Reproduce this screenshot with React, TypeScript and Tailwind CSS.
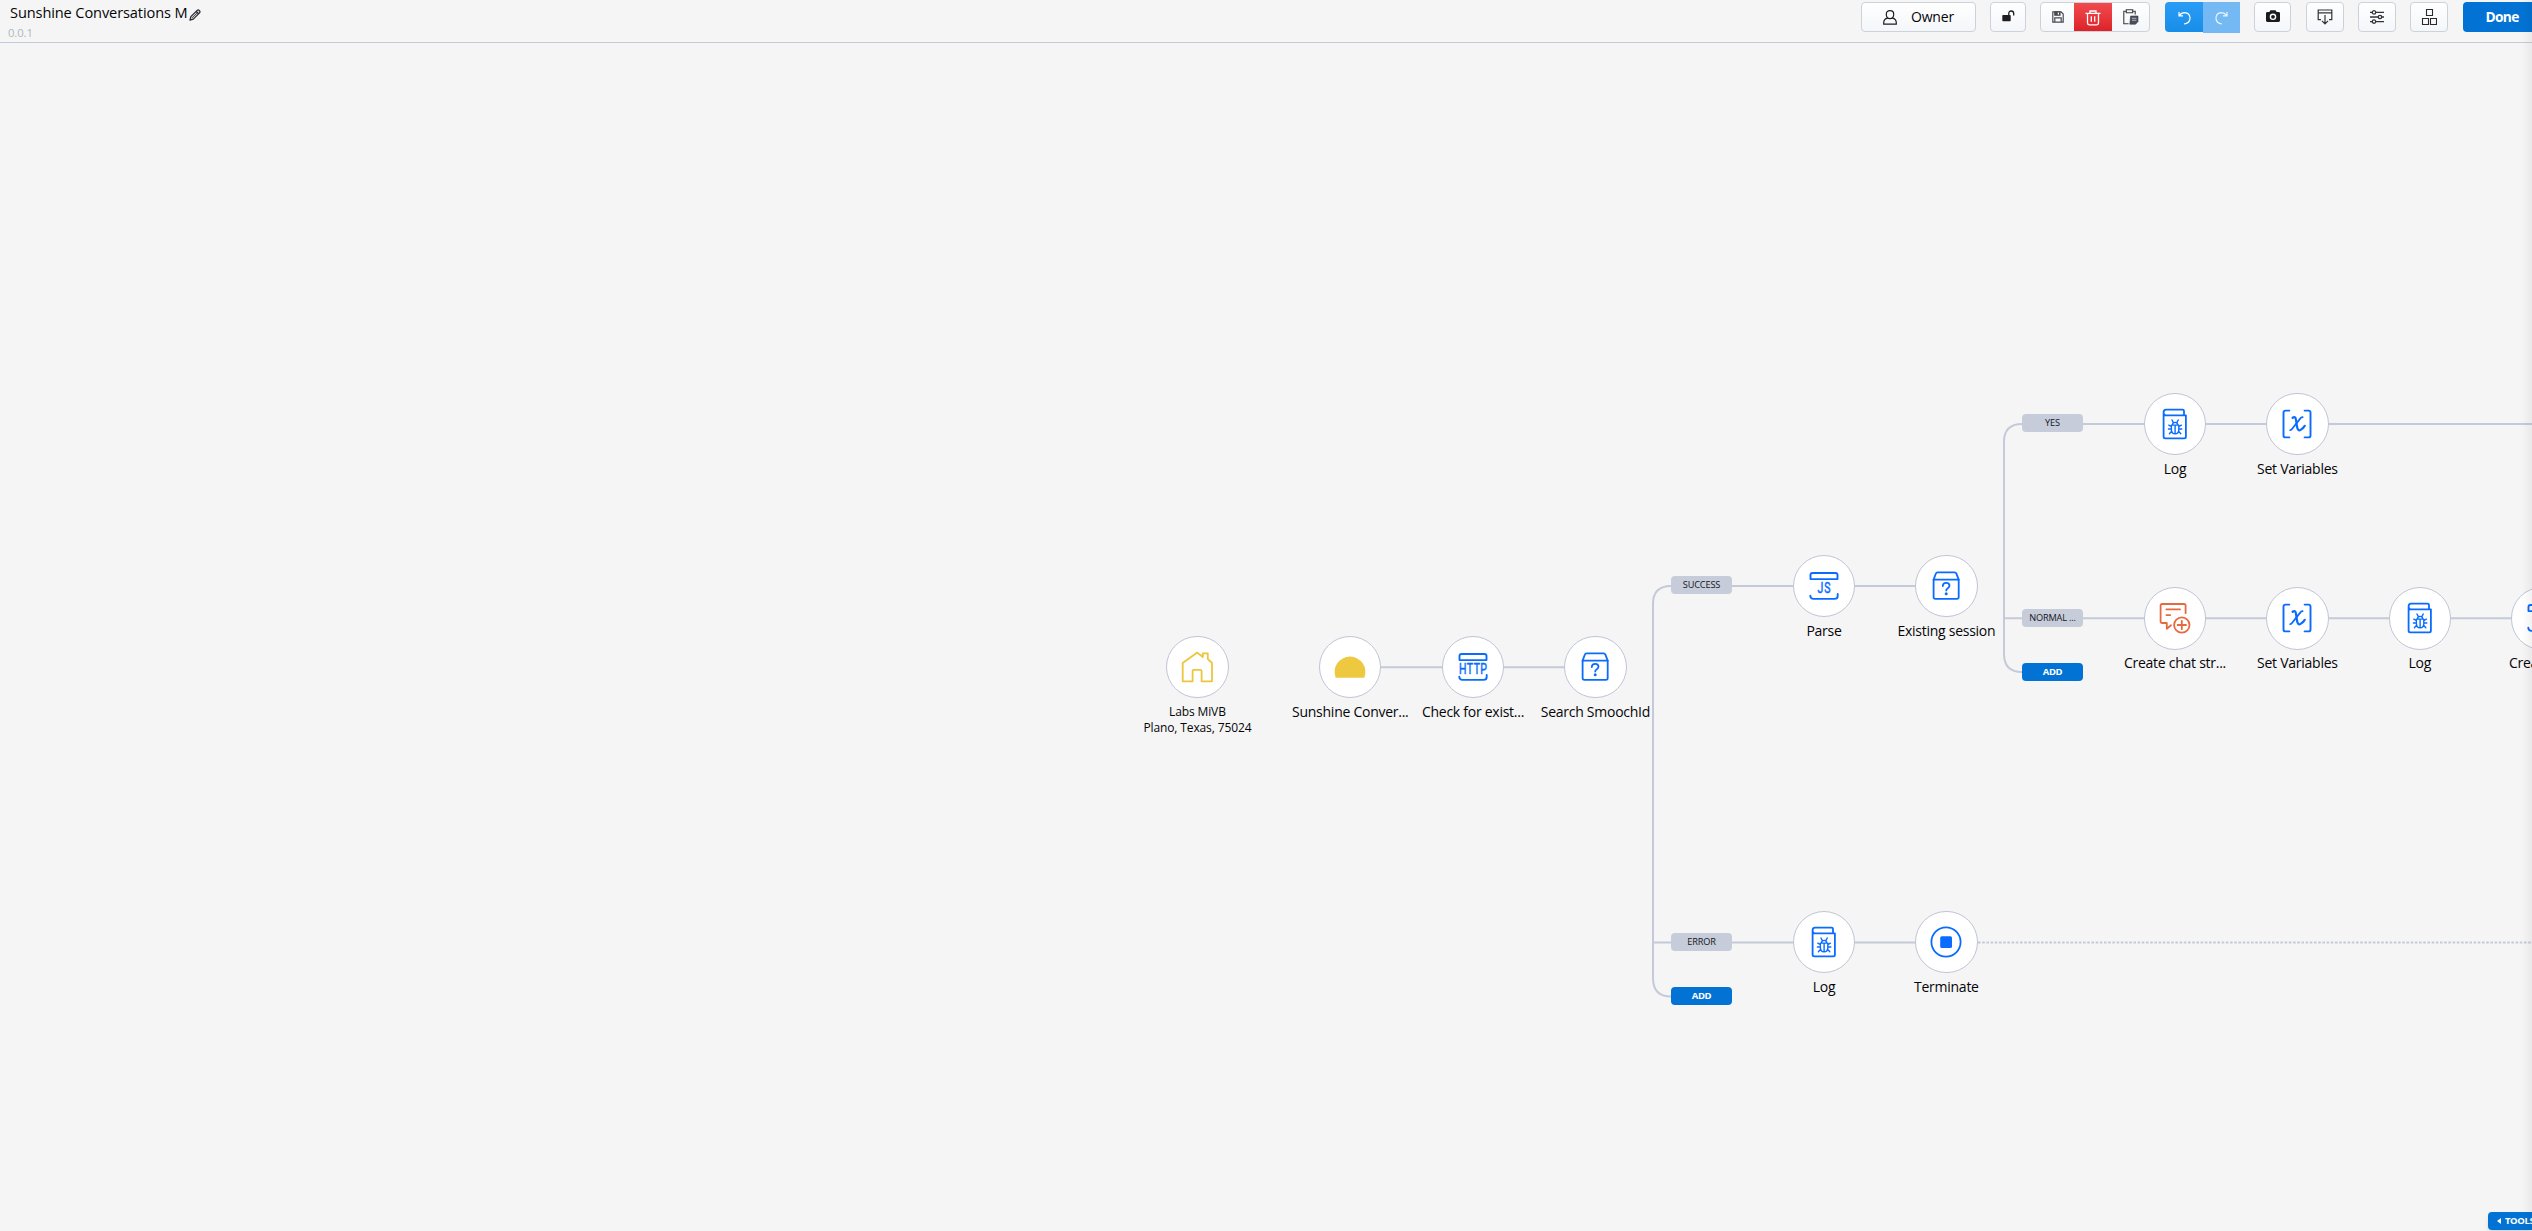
import React from "react";

type IconName = "home" | "sun" | "http" | "js" | "box" | "log" | "stop" | "vars" | "chat";

const BLUE = "#0a6cff";

function Sheet({ label, length }: { label: string; length: number }) {
  return (
    <g fill="none" stroke={BLUE} strokeWidth="1.9" strokeLinecap="round" strokeLinejoin="round">
      <path d="M-13.5 -6.9V-10.9Q-13.5 -13 -11.4 -13H11.4Q13.5 -13 13.5 -10.9V-6.9Z" />
      <path d="M-13.7 9.8Q-13.5 12.9 -10.5 12.9H10.5Q13.7 12.9 13.7 10V8" />
      <text
        transform="scale(0.72 1)"
        x={-length / 2 / 0.72}
        y="7.4"
        textLength={length / 0.72}
        lengthAdjust="spacing"
        fontSize="14.6"
        fill={BLUE}
        stroke={BLUE}
        strokeWidth="0.5"
        className="font-['Roboto',sans-serif]"
      >
        {label}
      </text>
    </g>
  );
}

function NodeIcon({ name }: { name: IconName }) {
  return (
    <svg viewBox="-20 -20 40 40" className="size-10 overflow-visible" fill="none" strokeLinejoin="round" strokeLinecap="round">
      {name === "home" && (
        <path
          d="M-14.3 -4V14.3H-4.4V4Q-4.4 2.8 -3.2 2.8H3.4Q4.6 2.8 4.6 4V14.3H15V-4L10.8 -8V-13.7H5.8V-10L0.3 -14.4Z"
          stroke="#edc53b"
          strokeWidth="1.8"
        />
      )}
      {name === "sun" && <path d="M-14.3 10.7A15.4 15.4 0 1 1 14.3 10.7Z" fill="#eec93f" />}
      {name === "http" && <Sheet label="HTTP" length={28} />}
      {name === "js" && <Sheet label="JS" length={13} />}
      {name === "box" && (
        <g stroke={BLUE} strokeWidth="1.8">
          <path d="M-12.4 -6.4H12.7V11Q12.7 12.8 10.9 12.8H-10.6Q-12.4 12.8 -12.4 11Z" />
          <path d="M-12.4 -6.4L-10.2 -12.3Q-9.8 -13.6 -8.4 -13.6H8.6Q10 -13.6 10.4 -12.3L12.7 -6.4" />
          <path d="M-3.2 0C-3 -4.2 3.5 -3.9 3.5 -0.2C3.5 2.2 0.2 2.1 0.2 4.5" strokeWidth="1.8" />
          <circle cx="0.2" cy="7.7" r="1.5" fill={BLUE} stroke="none" />
        </g>
      )}
      {name === "log" && (
        <g stroke={BLUE} strokeWidth="1.8">
          <path d="M-11.4 -11.3V12.7Q-11.4 14.3 -9.7 14.3H9.2Q10.9 14.3 10.9 12.7V-8.7H-9.1Q-11.4 -8.7 -11.4 -11.6Q-11.4 -14.3 -9 -14.3H7.5Q9 -14.3 9 -13V-8.7" />
          <path
            d="M-3.6 1.1H3.8V5.4Q3.8 9.7 0.1 9.7Q-3.6 9.7 -3.6 5.4ZM-2.6 1Q-2.3 -1.6 0.1 -1.6Q2.5 -1.6 2.8 1M0.1 1.2V9.5M-1.8 -1.6L-3 -4M2 -1.6L3.2 -4M-3.6 2.6L-6.2 1.2M3.8 2.6L6.4 1.2M-3.6 5H-6.6M3.8 5H6.8M-3.4 7.3L-5.6 9.7M3.6 7.3L5.8 9.7"
            strokeWidth="1.4"
          />
        </g>
      )}
      {name === "stop" && (
        <>
          <circle r="14.6" stroke={BLUE} strokeWidth="1.8" />
          <rect x="-5.8" y="-5.8" width="11.8" height="11.8" rx="1.5" fill={BLUE} />
        </>
      )}
      {name === "vars" && (
        <>
          <path
            d="M-7.6 -13.4H-11.5Q-13.5 -13.4 -13.5 -11.4V11.4Q-13.5 13.4 -11.5 13.4H-7.6M7.6 -13.4H11.5Q13.5 -13.4 13.5 -11.4V11.4Q13.5 13.4 11.5 13.4H7.6"
            stroke={BLUE}
            strokeWidth="1.9"
          />
          <path d="M5.6 -6.8Q4.6 -7.2 3.2 -5.4L-4.8 4.8Q-5.9 6.4 -6.8 6.2" stroke={BLUE} strokeWidth="1.8" />
          <path
            d="M-4.4 -6.2Q-1.6 -8 -1.1 -4.6L0.1 3Q0.8 7.4 3.6 5.9Q6 4.5 7.7 1.8"
            stroke={BLUE}
            strokeWidth="2.2"
          />
        </>
      )}
      {name === "chat" && (
        <g stroke="#e8683f" strokeWidth="1.8">
          <path d="M10.6 -4.8V-12.4Q10.6 -14 9 -14H-12.8Q-14.4 -14 -14.4 -12.4V3.2Q-14.4 5 -12.8 5H-8.2V10.8L-4 7.2" />
          <path d="M-8.6 -8.6H5M-8.6 -2.9H-4.8" />
          <circle cx="6.8" cy="7" r="7.7" />
          <path d="M6.8 2.8V11.2M2.6 7H11" />
        </g>
      )}
    </svg>
  );
}

const nodes: { x: number; y: number; icon: IconName; label: string }[] = [
  { x: 1350.3, y: 667, icon: "sun", label: "Sunshine Conver..." },
  { x: 1473, y: 667, icon: "http", label: "Check for exist..." },
  { x: 1595.4, y: 667, icon: "box", label: "Search SmoochId" },
  { x: 1824, y: 586, icon: "js", label: "Parse" },
  { x: 1946.4, y: 586, icon: "box", label: "Existing session" },
  { x: 1824, y: 942.3, icon: "log", label: "Log" },
  { x: 1946.4, y: 942.3, icon: "stop", label: "Terminate" },
  { x: 2175, y: 424, icon: "log", label: "Log" },
  { x: 2297.4, y: 424, icon: "vars", label: "Set Variables" },
  { x: 2175, y: 618.4, icon: "chat", label: "Create chat str..." },
  { x: 2297.4, y: 618.4, icon: "vars", label: "Set Variables" },
  { x: 2419.8, y: 618.4, icon: "log", label: "Log" },
  { x: 2542.2, y: 618.4, icon: "js", label: "Create JSO" },
];

const tags: { x: number; y: number; label: string; add?: boolean }[] = [
  { x: 1671, y: 576, label: "SUCCESS" },
  { x: 1671, y: 932.6, label: "ERROR" },
  { x: 1671, y: 987.3, label: "ADD", add: true },
  { x: 2022, y: 414, label: "YES" },
  { x: 2022, y: 608.5, label: "NORMAL ..." },
  { x: 2022, y: 663.2, label: "ADD", add: true },
];

function FlowNode({ x, y, icon, label }: (typeof nodes)[number]) {
  return (
    <div className="absolute flex w-40 -translate-x-1/2 flex-col items-center" style={{ left: x, top: y - 31.2 }}>
      <div className="flex size-[62.4px] items-center justify-center rounded-full border border-[#bfc5d5] bg-white">
        <NodeIcon name={icon} />
      </div>
      <span className="mt-[3.6px] text-[14px] leading-5 tracking-[-0.26px] whitespace-nowrap">{label}</span>
    </div>
  );
}

function FlowTag({ x, y, label, add }: (typeof tags)[number]) {
  return (
    <div
      className={
        add
          ? "absolute flex h-[18px] w-[61px] items-center justify-center rounded bg-[#0273d4] text-[9.5px] font-bold tracking-[-0.3px] text-white"
          : "absolute flex h-[18px] w-[61px] items-center justify-center rounded bg-[#c6ccd9] text-[9.2px] tracking-[-0.15px] text-[#14161d]"
      }
      style={{ left: x, top: y }}
    >
      {label}
    </div>
  );
}

function ToolButton({ className, children }: { className: string; children: React.ReactNode }) {
  return (
    <button
      className={
        "flex h-[30px] items-center justify-center rounded border border-[#cbd2d9] bg-linear-to-b from-white to-[#f4f6f9] " +
        className
      }
    >
      {children}
    </button>
  );
}

function Header() {
  return (
    <header className="flex h-[43px] w-full items-start justify-between border-b border-[#c5c9dc]">
      <div className="flex flex-col">
        <div className="flex h-[26px] items-center pl-[10px]">
          <span className="text-[14.6px] leading-[24px] tracking-[-0.12px] whitespace-nowrap -mt-[2px]">Sunshine Conversations M</span>
          <svg
            viewBox="0 0 13 13"
            className="mt-[4px] ml-[2px] size-[12px]"
            fill="#d0d0d6"
            stroke="#2c2832"
            strokeWidth="1.3"
            strokeLinejoin="round"
          >
            <path d="M1 12L2 8.3L8.8 1.5Q10 0.5 11.3 1.7Q12.5 3 11.4 4.2L4.7 10.9ZM7.8 2.6L10.3 5.1" />
            <path d="M3.4 9.6L9 4" strokeWidth="0.8" />
          </svg>
        </div>
        <span className="pl-[8px] text-[11.3px] leading-[14px] tracking-[-0.1px] text-[#b0b5bc]">0.0.1</span>
      </div>
      <div className="flex shrink-0 pt-[2px]">
        <ToolButton className="mr-[14px] w-[115px]">
          <svg viewBox="0 0 14 15" className="mt-px mr-[14px] h-[15px] w-[14px]" fill="none" stroke="#1d1d22" strokeWidth="1.2">
            <path d="M3.3 4.2Q3.3 0.7 7 0.7Q10.7 0.7 10.7 4.2Q10.7 8.6 7 8.6Q3.3 8.6 3.3 4.2ZM4.6 8.2Q0.8 8.9 0.7 12.8V14.2H13.3V12.8Q13.2 8.9 9.4 8.2" />
          </svg>
          <span className="mb-[2px] text-[14px] tracking-[-0.2px]">Owner</span>
        </ToolButton>
        <ToolButton className="mr-[14px] w-[36px]">
          <svg viewBox="0 0 13 12" className="mb-[2px] h-[12px] w-[13px]" fill="none">
            <rect x="0.3" y="5" width="8.4" height="6.2" rx="0.8" fill="#1d1d22" />
            <path d="M6.8 5V3.4Q6.8 1 9.2 1Q11.7 1 11.7 3.4V5.4" stroke="#1d1d22" strokeWidth="1.3" />
          </svg>
        </ToolButton>
        <div className="mr-[15px] flex h-[30px] w-[110px] overflow-hidden rounded border border-[#cbd2d9] bg-linear-to-b from-white to-[#f4f6f9]">
          <div className="flex w-[33px] items-center justify-center">
            <svg viewBox="0 0 12 12" className="mb-px size-[12px]" fill="none" stroke="#4a4a54" strokeWidth="1.2">
              <path d="M0.8 0.8H9L11.2 3V11.2H0.8ZM2.8 11V6.8H9.2V11" />
              <path d="M2.8 0.8H8V4.2H2.8Z" fill="#4a4a54" />
              <path d="M6.4 1.4V3.4" stroke="#fff" />
            </svg>
          </div>
          <div className="-my-px flex w-[38px] items-center justify-center bg-linear-to-b from-[#f24a4f] to-[#dc1f27]">
            <svg viewBox="0 0 16 16" className="mt-px size-[16px]" fill="none" stroke="#fff" strokeWidth="1.3">
              <path d="M0.5 3.4H15.5M5 3.2V1H11V3.2M2.5 3.6V13Q2.5 14.8 4.3 14.8H11.7Q13.5 14.8 13.5 13V3.6M6.3 6.3V11.7M9.7 6.3V11.7" />
            </svg>
          </div>
          <div className="flex flex-1 items-center justify-center">
            <svg viewBox="0 0 16 16" className="size-[16px]" fill="none" stroke="#3a3a44" strokeWidth="1.1">
              <path d="M5.6 14.8H0.8V2.2H3.2M9.8 2.2H12.2V5.5" />
              <path d="M3.3 0.8H9.7V3.8H3.3Z" />
              <path d="M7.6 7H15V12.6L12.6 15.2H6.8L7.6 7Z" fill="#4a4e5e" strokeWidth="0.6" />
              <path d="M9 9.3H13.4M9 11.3H13.4" stroke="#c9ccd6" strokeWidth="0.8" />
            </svg>
          </div>
        </div>
        <div className="mr-[14px] flex w-[75px]">
          <div className="flex h-[30px] w-[38px] items-center justify-center rounded-l bg-linear-to-b from-[#2a9cf5] to-[#178ee9]">
            <svg viewBox="0 0 13 14" className="mt-px h-[14px] w-[13px]" fill="none" stroke="#fff" strokeWidth="1.2">
              <path d="M1 1V4.8H5M1.2 4.6Q3.4 1.7 6.7 1.7Q12 2.2 12 7.3Q11.8 12.4 6 13" />
            </svg>
          </div>
          <div className="flex h-[31px] w-[37px] items-center justify-center bg-[#74b9f3]">
            <svg viewBox="0 0 13 14" className="h-[14px] w-[13px]" fill="none" stroke="#e6f3fd" strokeWidth="1.2">
              <path d="M12 1V4.8H8M11.8 4.6Q9.6 1.7 6.3 1.7Q1 2.2 1 7.3Q1.2 12.4 7 13" />
            </svg>
          </div>
        </div>
        <ToolButton className="mr-[15px] w-[37px]">
          <svg viewBox="0 0 14 12" className="mb-[2px] h-[12px] w-[14px]">
            <path d="M1.4 2H3.4L4.4 0.2H9.6L10.6 2H12.6Q14 2 14 3.4V10.6Q14 12 12.6 12H1.4Q0 12 0 10.6V3.4Q0 2 1.4 2Z" fill="#1b1b1f" />
            <circle cx="7" cy="6.8" r="2.6" fill="#1b1b1f" stroke="#fff" strokeWidth="1.4" />
          </svg>
        </ToolButton>
        <ToolButton className="mr-[14px] w-[38px]">
          <svg viewBox="0 0 16 16" className="size-[16px]" fill="none" stroke="#33333b" strokeWidth="1.2">
            <path d="M4 10.6H1.2V1H14.8V10.6H12M1.2 3.8H14.8M8 6V14.6M5 11.9L8 15L11 11.9" />
          </svg>
        </ToolButton>
        <ToolButton className="mr-[14px] w-[38px]">
          <svg viewBox="0 0 14 14" className="size-[14px]" fill="#fff" stroke="#33333b" strokeWidth="1.3">
            <path d="M0 2.4H14M0 7H14M0 11.6H14" />
            <circle cx="4" cy="2.4" r="1.7" />
            <circle cx="10" cy="7" r="1.7" />
            <circle cx="4" cy="11.6" r="1.7" />
          </svg>
        </ToolButton>
        <ToolButton className="mr-[15px] w-[38px]">
          <svg viewBox="0 0 16 16" className="size-[16px]" fill="none" stroke="#2f282d" strokeWidth="1.1">
            <path d="M5.5 0.5H11.5V6.5H5.5ZM1.5 9.5H7.5V15.5H1.5ZM9.5 9.5H15.5V15.5H9.5Z" />
          </svg>
        </ToolButton>
        <button className="flex h-[30px] w-[69px] items-center rounded-l bg-[#0273d4] pl-[22.5px] text-[13.8px] font-bold tracking-[-0.7px] text-white">
          Done
        </button>
      </div>
    </header>
  );
}

export default function App() {
  return (
    <div className="relative flex h-[1231px] w-[2532px] flex-col overflow-hidden bg-[#f5f5f5] font-['Open_Sans',sans-serif] text-[#050508]">
      <Header />
      <div className="pointer-events-none absolute inset-0">
        <svg viewBox="0 0 2532 1231" className="absolute inset-0 h-[1231px] w-[2532px]" fill="none" stroke="#c5cad9" strokeWidth="2">
          <path d="M1350 667.2H1595" />
          <path d="M1671 586Q1653 586 1653 604V978Q1653 996.5 1671 996.5M1671 586H1946M1653 942.4H1946" />
          <path d="M2022 424Q2004 424 2004 442V654Q2004 672 2022 672M2022 424H2532M2004 618.3H2532" />
          <path d="M1978 942.5H2532" strokeWidth="1.8" strokeDasharray="2.6 1.6" />
        </svg>
        <div className="absolute flex w-40 -translate-x-1/2 flex-col items-center" style={{ left: 1197.4, top: 635.8 }}>
          <div className="flex size-[62.4px] items-center justify-center rounded-full border border-[#bfc5d5] bg-white">
            <NodeIcon name="home" />
          </div>
          <p className="mt-[6px] text-center text-[12px] leading-4 tracking-[-0.12px] whitespace-nowrap">
            Labs MiVB
            <br />
            Plano, Texas, 75024
          </p>
        </div>
        {nodes.map((n) => (
          <FlowNode key={n.x + "-" + n.y} {...n} />
        ))}
        {tags.map((t) => (
          <FlowTag key={t.x + "-" + t.y} {...t} />
        ))}
      </div>
      <div className="absolute right-0 bottom-px flex h-[18px] w-[44px] items-center gap-[4px] rounded-l bg-[#0273d4] pl-[9px] text-[9.5px] font-bold tracking-[-0.4px] text-white shadow-md">
        <svg viewBox="0 0 4 6" className="h-[6px] w-[4px] shrink-0" fill="#fff">
          <path d="M4 0V6L0 3Z" />
        </svg>
        TOOLS
      </div>
      <div className="pointer-events-none absolute top-0 right-0 h-full w-[10px] bg-linear-to-r from-transparent to-black/5" />
    </div>
  );
}
